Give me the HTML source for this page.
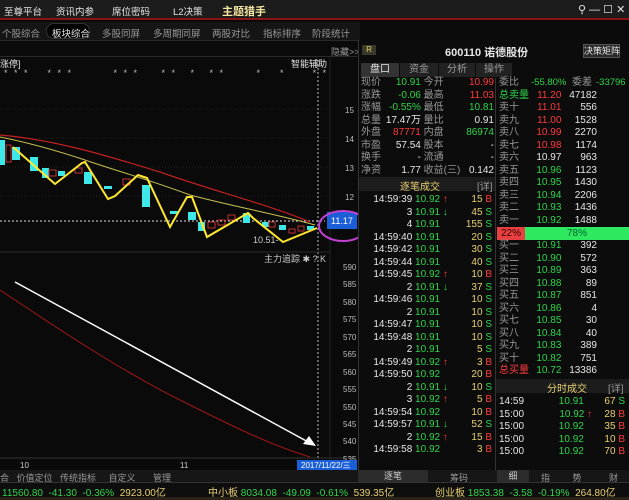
<!DOCTYPE html>
<html><head><meta charset="utf-8"><style>
*{margin:0;padding:0;box-sizing:border-box}
body{width:629px;height:500px;background:#0a0a0a;overflow:hidden;position:relative;font-family:"Liberation Sans","Noto Sans CJK SC",sans-serif;font-size:10px;color:#ccc}
.a{position:absolute;white-space:nowrap}
.g{color:#2fd54a}.r{color:#ff3b3b}.w{color:#e6e6e6}.y{color:#e8d070}.gr{color:#999}
table{border-collapse:collapse;position:absolute}
td{padding:0;height:12.5px;line-height:12.5px;white-space:nowrap}
.rt{text-align:right}
</style></head><body>
<div class="a" style="left:0;top:0;width:629px;height:20px;background:#1c1c1c;border-bottom:2px solid #8a1414"></div>
<div class="a w" style="left:4px;top:4px;font-size:9.5px">至尊平台</div>
<div class="a w" style="left:56px;top:4px;font-size:9.5px">资讯内参</div>
<div class="a w" style="left:112px;top:4px;font-size:9.5px">席位密码</div>
<div class="a w" style="left:173px;top:4px;font-size:9.5px">L2决策</div>
<div class="a" style="left:222px;top:3px;color:#f4e6a0;font-weight:bold;font-size:11px">主题猎手</div>
<div class="a w" style="left:578px;top:3px;font-size:11px">⚲ — ☐ ✕</div>
<div class="a" style="left:0;top:22px;width:360px;height:19px;background:#151515;border-bottom:1px solid #2a2a2a"></div>
<div class="a gr" style="left:2px;top:26px;font-size:9.5px">个股综合</div>
<div class="a" style="left:46px;top:23px;width:44px;height:16px;border-radius:8px;background:#000;border:1px solid #333"></div>
<div class="a w" style="left:52px;top:26px;font-size:9.5px">板块综合</div>
<div class="a gr" style="left:102px;top:26px;font-size:9.5px">多股同屏</div>
<div class="a gr" style="left:153px;top:26px;font-size:9.5px">多周期同屏</div>
<div class="a gr" style="left:212px;top:26px;font-size:9.5px">两股对比</div>
<div class="a gr" style="left:263px;top:26px;font-size:9.5px">指标排序</div>
<div class="a gr" style="left:312px;top:26px;font-size:9.5px">阶段统计</div>
<div class="a gr" style="left:331px;top:45px;font-size:9px">隐藏&gt;&gt;</div>
<div class="a" style="left:0;top:56px;width:357px;height:1px;background:#2a2a2a"></div>
<div class="a w" style="left:0;top:57px;font-size:9px">涨停]</div>
<div class="a w" style="left:291px;top:57px;font-size:9px">智能辅助</div>
<div class="a" style="left:4px;top:68px;color:#bbb;letter-spacing:2px;font-size:9px">* * * &nbsp; &nbsp;* * * &nbsp; &nbsp; &nbsp; &nbsp; * * * &nbsp; &nbsp; * * &nbsp; * &nbsp; * * &nbsp; &nbsp; &nbsp; * &nbsp; &nbsp;* &nbsp; &nbsp; &nbsp;* *</div>
<svg class="a" style="left:0;top:56px" width="358" height="414" viewBox="0 56 358 414">
<g stroke="#222" stroke-dasharray="1,2"><line x1="0" y1="109" x2="330" y2="109"/><line x1="0" y1="138" x2="330" y2="138"/><line x1="0" y1="167" x2="330" y2="167"/><line x1="0" y1="196" x2="330" y2="196"/></g>
<line x1="0" y1="221" x2="325" y2="221" stroke="#ddd" stroke-dasharray="2,2"/>
<line x1="318" y1="60" x2="318" y2="460" stroke="#bbb" stroke-dasharray="2,2"/>
<line x1="0" y1="252" x2="330" y2="252" stroke="#2a2a2a"/>
<line x1="0" y1="458" x2="357" y2="458" stroke="#333"/>
<line x1="330" y1="56" x2="330" y2="460" stroke="#222"/>
<g fill="#3ee8e8">
<rect x="0" y="140" width="5" height="25"/><rect x="12" y="147" width="8" height="13"/><rect x="30" y="157" width="8" height="14"/><rect x="42" y="168" width="7" height="10"/><rect x="58" y="171" width="7" height="5"/><rect x="84" y="172" width="8" height="12"/><rect x="104" y="186" width="8" height="3"/><rect x="142" y="185" width="8" height="22"/><rect x="170" y="211" width="8" height="3"/><rect x="188" y="212" width="8" height="8"/><rect x="198" y="222" width="7" height="9"/><rect x="243" y="213" width="7" height="10"/><rect x="262" y="222" width="7" height="5"/><rect x="279" y="225" width="7" height="5"/><rect x="307" y="226" width="7" height="4"/>
</g>
<g fill="none" stroke="#c03030"><rect x="6" y="145" width="5" height="17"/><rect x="49" y="170" width="7" height="6"/><rect x="75" y="168" width="7" height="5"/><rect x="123" y="179" width="7" height="6"/><rect x="208" y="222" width="7" height="6"/><rect x="218" y="220" width="7" height="5"/><rect x="228" y="215" width="7" height="5"/><rect x="269" y="222" width="6" height="5"/><rect x="289" y="229" width="6" height="4"/><rect x="298" y="226" width="6" height="5"/></g>
<path d="M0,135 C60,140 120,160 160,172 C210,190 270,205 310,222" fill="none" stroke="#c02020" stroke-width="1.2"/>
<path d="M0,137 C40,145 70,155 85,160 C120,172 150,180 190,195 C240,208 280,215 315,225" fill="none" stroke="#c8c050" stroke-width="1"/>
<polyline points="13,147 55,184 82,163 85,162 108,199 115,196 138,175 147,178 170,227 187,197 192,197 207,237 248,213 253,218 283,242 317,228" fill="none" stroke="#ffe830" stroke-width="2"/>
<text x="253" y="243" fill="#ccc" font-size="9" font-family="Liberation Sans">10.51-</text>
<rect x="327" y="212" width="30" height="17" fill="#1a5fd8"/>
<text x="331" y="224" fill="#fff" font-size="9" font-family="Liberation Sans">11.17</text>
<ellipse cx="343" cy="226" rx="24" ry="15" fill="none" stroke="#c040d0" stroke-width="2"/>
<g fill="#bbb" font-size="8" font-family="Liberation Sans"><text x="345" y="113">15</text><text x="345" y="142">14</text><text x="345" y="171">13</text><text x="345" y="200">12</text>
<text x="343" y="270">590</text><text x="343" y="287">585</text><text x="343" y="305">580</text><text x="343" y="322">575</text><text x="343" y="340">570</text><text x="343" y="357">565</text><text x="343" y="375">560</text><text x="343" y="392">555</text><text x="343" y="410">550</text><text x="343" y="427">545</text><text x="343" y="444">540</text><text x="343" y="462">535</text></g>
<text x="264" y="262" fill="#ccc" font-size="9" font-family="Liberation Sans,Noto Sans CJK SC">主力追踪 ✱ ? K</text>
<path d="M0,290 C60,330 120,370 180,400 C230,425 270,445 310,457" fill="none" stroke="#a01818" stroke-width="1"/>
<line x1="15" y1="282" x2="310" y2="443" stroke="#fff" stroke-width="1.5"/>
<path d="M316,446 L303,444 L309,436 Z" fill="#fff"/>
<rect x="297" y="460" width="60" height="10" fill="#1a5fd8"/>
<text x="301" y="468" fill="#fff" font-size="8" font-family="Liberation Sans,Noto Sans CJK SC">2017/11/22/三</text>
<text x="20" y="468" fill="#ccc" font-size="8">10</text><text x="180" y="468" fill="#ccc" font-size="8">11</text>
</svg>
<div class="a" style="left:358px;top:40px;width:271px;height:430px;background:#0c0c0c;border-left:1px solid #333"></div>
<div class="a" style="left:362px;top:45px;width:14px;height:10px;background:#3a3a2a;color:#e0d060;font-size:8px;text-align:center;line-height:10px">R</div>
<div class="a w" style="left:445px;top:44px;font-weight:bold;font-size:11px">600110 诺德股份</div>
<div class="a w" style="left:583px;top:44px;width:37px;height:14px;background:#2a2a2a;border:1px solid #555;font-size:9px;text-align:center;line-height:12px">决策矩阵</div>
<div class="a w" style="left:361px;top:63px;width:38px;height:14px;background:#333;text-align:center;line-height:14px">盘口</div>
<div class="a gr" style="left:400px;top:63px;width:38px;height:14px;background:#222;text-align:center;line-height:14px">资金</div>
<div class="a gr" style="left:439px;top:63px;width:36px;height:14px;background:#222;text-align:center;line-height:14px">分析</div>
<div class="a gr" style="left:476px;top:63px;width:36px;height:14px;background:#222;text-align:center;line-height:14px">操作</div>
<table style="left:361px;top:77px;width:133px">
<tr><td class="gr">现价</td><td class="rt g">10.91</td><td class="gr">&nbsp;今开</td><td class="rt r">10.99</td></tr>
<tr><td class="gr">涨跌</td><td class="rt g">-0.06</td><td class="gr">&nbsp;最高</td><td class="rt r">11.03</td></tr>
<tr><td class="gr">涨幅</td><td class="rt g">-0.55%</td><td class="gr">&nbsp;最低</td><td class="rt g">10.81</td></tr>
<tr><td class="gr">总量</td><td class="rt w">17.47万</td><td class="gr">&nbsp;量比</td><td class="rt w">0.91</td></tr>
<tr><td class="gr">外盘</td><td class="rt r">87771</td><td class="gr">&nbsp;内盘</td><td class="rt g">86974</td></tr>
<tr><td class="gr">市盈</td><td class="rt w">57.54</td><td class="gr">&nbsp;股本</td><td class="rt w">-</td></tr>
<tr><td class="gr">换手</td><td class="rt w">-</td><td class="gr">&nbsp;流通</td><td class="rt w">-</td></tr>
<tr><td class="gr">净资</td><td class="rt w">1.77</td><td class="gr">&nbsp;收益(三)</td><td class="rt w">0.142</td></tr>
</table>
<div class="a" style="left:359px;top:177px;width:136px;height:14px;background:#1c1c1c"></div>
<div class="a y" style="left:400px;top:178px">逐笔成交</div><div class="a gr" style="left:477px;top:178px">[详]</div>
<table style="left:362px;top:194px;width:130px">
<tr><td class="rt w">14:59:39</td><td class="g">&nbsp;10.92 <span class="r">↑</span></td><td class="rt y">15 <span class="r">B</span></td></tr>
<tr><td class="rt w">3</td><td class="g">&nbsp;10.91 ↓</td><td class="rt y">45 <span class="g">S</span></td></tr>
<tr><td class="rt w">4</td><td class="g">&nbsp;10.91</td><td class="rt y">155 <span class="g">S</span></td></tr>
<tr><td class="rt w">14:59:40</td><td class="g">&nbsp;10.91</td><td class="rt y">20 <span class="g">S</span></td></tr>
<tr><td class="rt w">14:59:42</td><td class="g">&nbsp;10.91</td><td class="rt y">30 <span class="g">S</span></td></tr>
<tr><td class="rt w">14:59:44</td><td class="g">&nbsp;10.91</td><td class="rt y">40 <span class="g">S</span></td></tr>
<tr><td class="rt w">14:59:45</td><td class="g">&nbsp;10.92 <span class="r">↑</span></td><td class="rt y">10 <span class="r">B</span></td></tr>
<tr><td class="rt w">2</td><td class="g">&nbsp;10.91 ↓</td><td class="rt y">37 <span class="g">S</span></td></tr>
<tr><td class="rt w">14:59:46</td><td class="g">&nbsp;10.91</td><td class="rt y">10 <span class="g">S</span></td></tr>
<tr><td class="rt w">2</td><td class="g">&nbsp;10.91</td><td class="rt y">10 <span class="g">S</span></td></tr>
<tr><td class="rt w">14:59:47</td><td class="g">&nbsp;10.91</td><td class="rt y">10 <span class="g">S</span></td></tr>
<tr><td class="rt w">14:59:48</td><td class="g">&nbsp;10.91</td><td class="rt y">10 <span class="g">S</span></td></tr>
<tr><td class="rt w">2</td><td class="g">&nbsp;10.91</td><td class="rt y">5 <span class="g">S</span></td></tr>
<tr><td class="rt w">14:59:49</td><td class="g">&nbsp;10.92 <span class="r">↑</span></td><td class="rt y">3 <span class="r">B</span></td></tr>
<tr><td class="rt w">14:59:50</td><td class="g">&nbsp;10.92</td><td class="rt y">20 <span class="r">B</span></td></tr>
<tr><td class="rt w">2</td><td class="g">&nbsp;10.91 ↓</td><td class="rt y">10 <span class="g">S</span></td></tr>
<tr><td class="rt w">3</td><td class="g">&nbsp;10.92 <span class="r">↑</span></td><td class="rt y">5 <span class="r">B</span></td></tr>
<tr><td class="rt w">14:59:54</td><td class="g">&nbsp;10.92</td><td class="rt y">10 <span class="r">B</span></td></tr>
<tr><td class="rt w">14:59:57</td><td class="g">&nbsp;10.91 ↓</td><td class="rt y">52 <span class="g">S</span></td></tr>
<tr><td class="rt w">2</td><td class="g">&nbsp;10.92 <span class="r">↑</span></td><td class="rt y">15 <span class="r">B</span></td></tr>
<tr><td class="rt w">14:59:58</td><td class="g">&nbsp;10.92</td><td class="rt y">3 <span class="r">B</span></td></tr>
</table>
<div class="a" style="left:495px;top:78px;width:1px;height:392px;background:#333"></div>
<div class="a gr" style="left:499px;top:77px;line-height:12.5px">委比</div>
<div class="a g" style="left:531px;top:77px;line-height:12.5px;font-size:9.5px">-55.80%</div>
<div class="a gr" style="left:572px;top:77px;line-height:12.5px">委差</div>
<div class="a g" style="left:596px;top:77px;line-height:12.5px;font-size:9.5px">-33796</div>
<table style="left:499px;top:89.5px;width:128px">
<tr><td class="g">总卖量</td><td class="r rt">11.20</td><td class="rt w" style="padding-right:30px">47182</td></tr>
<tr><td class="gr">卖十</td><td class="r rt">11.01</td><td class="rt w" style="padding-right:30px">556</td></tr>
<tr><td class="gr">卖九</td><td class="r rt">11.00</td><td class="rt w" style="padding-right:30px">1528</td></tr>
<tr><td class="gr">卖八</td><td class="r rt">10.99</td><td class="rt w" style="padding-right:30px">2270</td></tr>
<tr><td class="gr">卖七</td><td class="r rt">10.98</td><td class="rt w" style="padding-right:30px">1174</td></tr>
<tr><td class="gr">卖六</td><td class="w rt">10.97</td><td class="rt w" style="padding-right:30px">963</td></tr>
<tr><td class="gr">卖五</td><td class="g rt">10.96</td><td class="rt w" style="padding-right:30px">1123</td></tr>
<tr><td class="gr">卖四</td><td class="g rt">10.95</td><td class="rt w" style="padding-right:30px">1430</td></tr>
<tr><td class="gr">卖三</td><td class="g rt">10.94</td><td class="rt w" style="padding-right:30px">2206</td></tr>
<tr><td class="gr">卖二</td><td class="g rt">10.93</td><td class="rt w" style="padding-right:30px">1436</td></tr>
<tr><td class="gr">卖一</td><td class="g rt">10.92</td><td class="rt w" style="padding-right:30px">1488</td></tr>
</table>
<div class="a" style="left:497px;top:227px;width:28px;height:13px;background:#e84040;color:#300;text-align:center;line-height:13px">22%</div>
<div class="a" style="left:525px;top:227px;width:104px;height:13px;background:#2ee860;color:#063;text-align:center;line-height:13px">78%</div>
<table style="left:499px;top:240px;width:128px">
<tr><td class="gr">买一</td><td class="g rt">10.91</td><td class="rt w" style="padding-right:30px">392</td></tr>
<tr><td class="gr">买二</td><td class="g rt">10.90</td><td class="rt w" style="padding-right:30px">572</td></tr>
<tr><td class="gr">买三</td><td class="g rt">10.89</td><td class="rt w" style="padding-right:30px">363</td></tr>
<tr><td class="gr">买四</td><td class="g rt">10.88</td><td class="rt w" style="padding-right:30px">89</td></tr>
<tr><td class="gr">买五</td><td class="g rt">10.87</td><td class="rt w" style="padding-right:30px">851</td></tr>
<tr><td class="gr">买六</td><td class="g rt">10.86</td><td class="rt w" style="padding-right:30px">4</td></tr>
<tr><td class="gr">买七</td><td class="g rt">10.85</td><td class="rt w" style="padding-right:30px">30</td></tr>
<tr><td class="gr">买八</td><td class="g rt">10.84</td><td class="rt w" style="padding-right:30px">40</td></tr>
<tr><td class="gr">买九</td><td class="g rt">10.83</td><td class="rt w" style="padding-right:30px">389</td></tr>
<tr><td class="gr">买十</td><td class="g rt">10.82</td><td class="rt w" style="padding-right:30px">751</td></tr>
<tr><td class="r">总买量</td><td class="g rt">10.72</td><td class="rt w" style="padding-right:30px">13386</td></tr>
</table>
<div class="a" style="left:496px;top:379px;width:133px;height:14px;background:#1c1c1c"></div>
<div class="a y" style="left:547px;top:380px">分时成交</div><div class="a gr" style="left:608px;top:380px">[详]</div>
<table style="left:499px;top:396px;width:126px">
<tr><td class="w">14:59</td><td class="g rt">10.91&nbsp;&nbsp;&nbsp;</td><td class="rt y">67 <span class="g">S</span></td></tr>
<tr><td class="w">15:00</td><td class="g rt">10.92 <span class="r">↑</span></td><td class="rt y">28 <span class="r">B</span></td></tr>
<tr><td class="w">15:00</td><td class="g rt">10.92&nbsp;&nbsp;&nbsp;</td><td class="rt y">35 <span class="r">B</span></td></tr>
<tr><td class="w">15:00</td><td class="g rt">10.92&nbsp;&nbsp;&nbsp;</td><td class="rt y">10 <span class="r">B</span></td></tr>
<tr><td class="w">15:00</td><td class="g rt">10.92&nbsp;&nbsp;&nbsp;</td><td class="rt y">70 <span class="r">B</span></td></tr>
</table>
<div class="a" style="left:0;top:470px;width:629px;height:12px;background:#161616"></div>
<div class="a gr" style="left:0;top:471px;font-size:9px">合 &nbsp; 价值定位 &nbsp; 传统指标 &nbsp; &nbsp; 自定义 &nbsp; &nbsp; &nbsp; 管理</div>
<div class="a" style="left:358px;top:470px;width:70px;height:12px;background:#2c2c2c;color:#ccc;text-align:center;font-size:9px;line-height:12px">逐笔</div>
<div class="a gr" style="left:450px;top:471px;font-size:9px">筹码</div>
<div class="a" style="left:497px;top:470px;width:32px;height:12px;background:#2c2c2c;color:#ccc;text-align:center;font-size:9px;line-height:12px">细</div>
<div class="a gr" style="left:541px;top:471px;font-size:9px">指 &nbsp; &nbsp; &nbsp; &nbsp; 势 &nbsp; &nbsp; &nbsp; &nbsp; &nbsp; 财</div>
<div class="a" style="left:0;top:482px;width:629px;height:15px;background:#0e0e0e;border-top:1px solid #333"></div>
<div class="a g" style="left:2px;top:484px">11560.80 &nbsp;-41.30 &nbsp;-0.36% &nbsp;<span class="y">2923.00亿</span></div>
<div class="a g" style="left:208px;top:484px"><span class="y">中小板</span> 8034.08 &nbsp;-49.09 &nbsp;-0.61% &nbsp;<span class="y">539.35亿</span></div>
<div class="a g" style="left:435px;top:484px"><span class="y">创业板</span> 1853.38 &nbsp;-3.58 &nbsp;-0.19% &nbsp;<span class="y">264.80亿</span></div>
<div class="a" style="left:0;top:497px;width:629px;height:3px;background:#2a2418"></div>
</body></html>
